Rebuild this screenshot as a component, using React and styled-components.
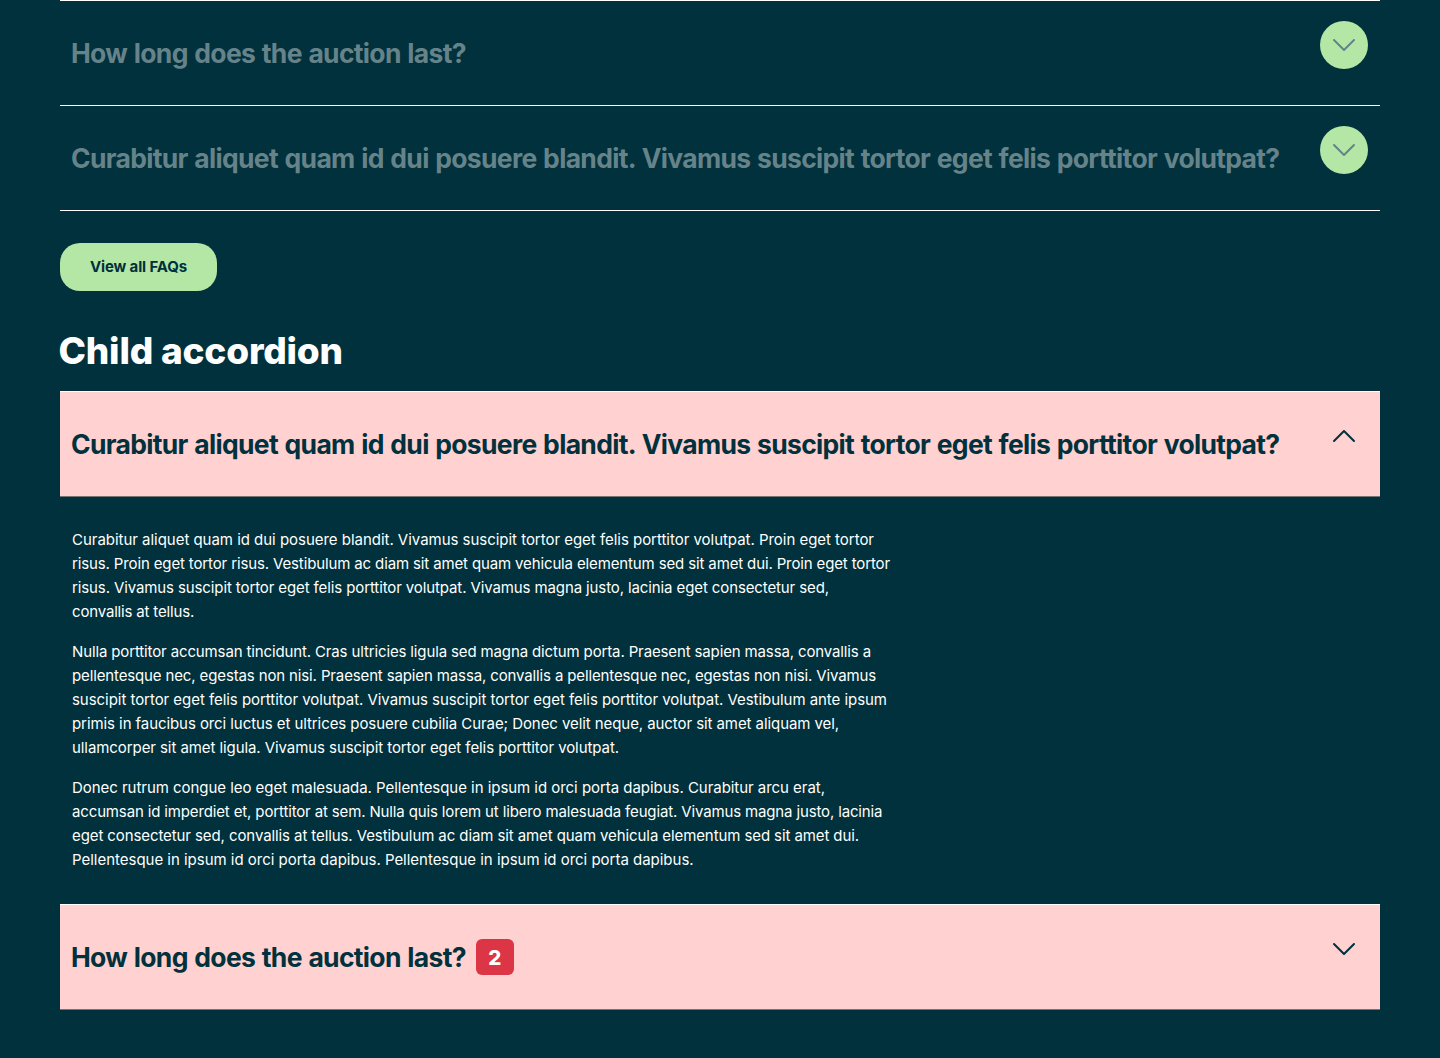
import React from "react";
import styled, { createGlobalStyle, css } from "styled-components";

const color = {
  night: "#00313c",
  muted: "#66838a",
  mint: "#b4e7a5",
  blush: "#ffd1d1",
  red: "#dc3545",
};

const GlobalStyle = createGlobalStyle`
  *, *::before, *::after { box-sizing: border-box; }
  body {
    margin: 0;
    background: ${color.night};
    color: #fff;
    font-family: Inter, "Liberation Sans", sans-serif;
  }
`;

const Page = styled.main`
  min-height: 1058px;
  padding: 0 60px;
  overflow: hidden;
`;

const Accordion = styled.section`
  display: flex;
  flex-direction: column;
`;

const Header = styled.button`
  display: flex;
  align-items: center;
  width: 100%;
  height: 106px;
  margin: 0;
  padding: 0 12px 0 11px;
  border: 0;
  border-top: 1px solid #fff;
  border-bottom: 1px solid ${(p) => (p.$filled ? "#777373" : "#fff")};
  background: ${(p) => (p.$filled ? color.blush : "transparent")};
  color: ${(p) => (p.$filled ? color.night : color.muted)};
  font-family: inherit;
  text-align: left;

  ${(p) =>
    p.$joined &&
    css`
      height: 105px;
      border-top: 0;
    `}
`;

const Question = styled.span`
  font-size: 26.5px;
  font-weight: 700;
  line-height: 36px;
  letter-spacing: -0.68px;
  word-spacing: 1px;
  white-space: nowrap;
`;

const Badge = styled.span`
  display: flex;
  align-items: center;
  justify-content: center;
  width: 38px;
  height: 36px;
  margin-left: 10px;
  padding-top: 2px;
  border-radius: 6px;
  background: ${color.red};
  color: #fff;
  font-size: 20.5px;
  font-weight: 800;
  line-height: 1;
`;

const Toggle = styled.span`
  display: flex;
  flex: none;
  align-items: center;
  justify-content: center;
  align-self: flex-start;
  width: 48px;
  height: 48px;
  margin: 20px 0 0 auto;
  border-radius: 50%;
  background: ${(p) => (p.$plain ? "transparent" : color.mint)};
  color: ${(p) => (p.$plain ? color.night : color.muted)};
`;

const Panel = styled.div`
  display: flex;
  flex-direction: column;
  gap: 16px;
  padding: 31px 12px 32px;
`;

const Paragraph = styled.p`
  margin: 0;
  font-size: 15px;
  line-height: 24px;
`;

const Line = styled.span`
  display: block;
  letter-spacing: ${(p) => p.$tracking}px;
  white-space: nowrap;
`;

const ViewAll = styled.button`
  display: flex;
  align-items: center;
  justify-content: center;
  width: 157px;
  height: 48px;
  margin: 32px 0 0;
  padding: 0;
  border: 0;
  border-radius: 20px;
  background: ${color.mint};
  color: ${color.night};
  font: 700 15px/24px Inter, "Liberation Sans", sans-serif;
  letter-spacing: -0.13px;
`;

const Title = styled.h2`
  margin: 36px 0 16px -1.5px;
  font-size: 37px;
  font-weight: 800;
  line-height: 48px;
  letter-spacing: -0.2px;
`;

function Chevron({ up }) {
  return (
    <svg width="24" height="24" viewBox="0 0 24 24" fill="none" stroke="currentColor" strokeWidth="2" strokeLinecap="round" strokeLinejoin="round">
      <path d={up ? "M2 17 12 7l10 10" : "m2 7 10 10L22 7"} />
    </svg>
  );
}

const LONG_QUESTION =
  "Curabitur aliquet quam id dui posuere blandit. Vivamus suscipit tortor eget felis porttitor volutpat?";
const SHORT_QUESTION = "How long does the auction last?";

const paragraphs = [
  [
    ["Curabitur aliquet quam id dui posuere blandit. Vivamus suscipit tortor eget felis porttitor volutpat. Proin eget tortor", -0.028],
    ["risus. Proin eget tortor risus. Vestibulum ac diam sit amet quam vehicula elementum sed sit amet dui. Proin eget tortor", -0.133],
    ["risus. Vivamus suscipit tortor eget felis porttitor volutpat. Vivamus magna justo, lacinia eget consectetur sed,", -0.111],
    ["convallis at tellus.", -0.17],
  ],
  [
    ["Nulla porttitor accumsan tincidunt. Cras ultricies ligula sed magna dictum porta. Praesent sapien massa, convallis a", -0.134],
    ["pellentesque nec, egestas non nisi. Praesent sapien massa, convallis a pellentesque nec, egestas non nisi. Vivamus", -0.132],
    ["suscipit tortor eget felis porttitor volutpat. Vivamus suscipit tortor eget felis porttitor volutpat. Vestibulum ante ipsum", -0.047],
    ["primis in faucibus orci luctus et ultrices posuere cubilia Curae; Donec velit neque, auctor sit amet aliquam vel,", -0.076],
    ["ullamcorper sit amet ligula. Vivamus suscipit tortor eget felis porttitor volutpat.", -0.077],
  ],
  [
    ["Donec rutrum congue leo eget malesuada. Pellentesque in ipsum id orci porta dapibus. Curabitur arcu erat,", -0.041],
    ["accumsan id imperdiet et, porttitor at sem. Nulla quis lorem ut libero malesuada feugiat. Vivamus magna justo, lacinia", -0.141],
    ["eget consectetur sed, convallis at tellus. Vestibulum ac diam sit amet quam vehicula elementum sed sit amet dui.", -0.093],
    ["Pellentesque in ipsum id orci porta dapibus. Pellentesque in ipsum id orci porta dapibus.", -0.018],
  ],
];

function Item({ question, badge, filled, joined, open }) {
  return (
    <Header type="button" $filled={filled} $joined={joined} aria-expanded={!!open}>
      <Question>{question}</Question>
      {badge && <Badge>{badge}</Badge>}
      <Toggle $plain={filled}>
        <Chevron up={open} />
      </Toggle>
    </Header>
  );
}

export default function App() {
  return (
    <>
      <GlobalStyle />
      <Page>
        <Accordion>
          <Item question={SHORT_QUESTION} />
          <Item question={LONG_QUESTION} joined />
        </Accordion>
        <ViewAll type="button">View all FAQs</ViewAll>
        <Title>Child accordion</Title>
        <Accordion>
          <Item question={LONG_QUESTION} filled open />
          <Panel>
            {paragraphs.map((lines, i) => (
              <Paragraph key={i}>
                {lines.map(([text, tracking]) => (
                  <Line key={text} $tracking={tracking}>{text} </Line>
                ))}
              </Paragraph>
            ))}
          </Panel>
          <Item question={SHORT_QUESTION} badge="2" filled />
        </Accordion>
      </Page>
    </>
  );
}
